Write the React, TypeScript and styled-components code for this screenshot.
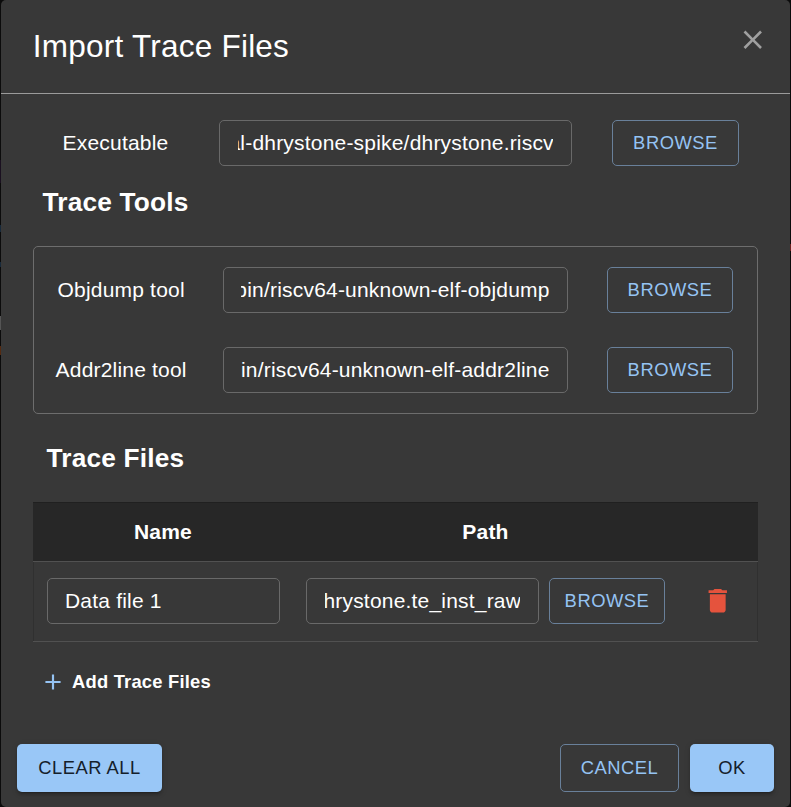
import React from "react";
import styled, { createGlobalStyle } from "styled-components";

const GlobalStyle = createGlobalStyle`
  * { box-sizing: border-box; }
  body {
    margin: 0;
    background: #0b0b0b;
    color: #fff;
    font-family: "Liberation Sans", Arial, sans-serif;
    font-size: 21px;
    letter-spacing: 0.00938em;
  }
`;

const Backdrop = styled.div`
  height: 807px;
  padding: 0 1px;
  overflow: hidden;
  background:
    linear-gradient(#0b0b0b 160px, #1a1020 160px 183px, #0b0b0b 183px 225px, #17293a 225px 232px,
      #0b0b0b 232px 262px, #17293a 262px 267px, #0b0b0b 267px 316px, #555 316px 330px, #0b0b0b 330px 346px,
      #552a10 346px 355px, #0b0b0b 355px) left / 1px 100% no-repeat,
    linear-gradient(#0b0b0b 244px, #6b1f1f 244px 251px, #0b0b0b 251px) right / 1px 100% no-repeat,
    #0b0b0b;
`;

const Dialog = styled.section`
  display: flex;
  flex-direction: column;
  height: 807px;
  border-radius: 5px;
  background: #383838;
`;

const Header = styled.header`
  display: flex;
  justify-content: space-between;
  height: 94px;
  padding: 21px 21px 0 31.8px;
  border-bottom: 1px solid #9b9b9b;
`;

const Title = styled.h1`
  margin: 0;
  font-size: 31.5px;
  font-weight: 400;
  line-height: 50px;
  letter-spacing: 0.0075em;
`;

const CloseButton = styled.button`
  display: flex;
  width: 32px;
  height: 38px;
  padding: 3px 0 0;
  border: 0;
  background: none;
  color: #a0a0a0;
`;

const Content = styled.main`
  flex: 1;
  padding: 0 32px;
`;

const FieldRow = styled.div<{ $columns: string }>`
  display: grid;
  grid-template-columns: ${(p) => p.$columns};
  align-items: center;
  height: 46px;
`;

const ExecutableRow = styled(FieldRow)`
  margin-top: 26px;
`;

const Label = styled.label<{ $nudge?: number }>`
  padding-left: ${(p) => p.$nudge ?? 0}px;
  text-align: center;
  white-space: nowrap;
  line-height: 30px;
`;

const Gap = styled.span``;

const TextField = styled.div<{ $inset: number }>`
  height: 46px;
  min-width: 0;
  padding: 0 ${(p) => p.$inset}px;
  border: 1px solid #696969;
  border-radius: 5px;
`;

const FieldValue = styled.div<{ $scrolled?: boolean; $shift: number }>`
  display: flex;
  justify-content: ${(p) => (p.$scrolled ? "flex-end" : "flex-start")};
  overflow: hidden;
  line-height: 44px;
  white-space: nowrap;

  span {
    flex: none;
    margin-right: ${(p) => p.$shift}px;
  }
`;

const Button = styled.button<{ $filled?: boolean; $tall?: boolean; $width?: number }>`
  width: ${(p) => (p.$width ? `${p.$width}px` : "100%")};
  height: ${(p) => (p.$tall ? 48 : 46)}px;
  padding: 0;
  border: ${(p) => (p.$filled ? "0" : "1px solid #69809a")};
  border-radius: 5px;
  background: ${(p) => (p.$filled ? "#99c7f7" : "transparent")};
  box-shadow: ${(p) =>
    p.$filled
      ? "0 4px 1px -3px rgba(0,0,0,.2), 0 2.6px 2.6px rgba(0,0,0,.14), 0 1.3px 6.6px rgba(0,0,0,.12)"
      : "none"};
  color: ${(p) => (p.$filled ? "#15202b" : "#95c3f3")};
  font: 400 18.375px "Liberation Sans", Arial, sans-serif;
  letter-spacing: 0.02857em;
`;

const SectionTitle = styled.h2<{ $indent: number; $top: number }>`
  margin: ${(p) => p.$top}px 0 0 ${(p) => p.$indent}px;
  font-size: 26.25px;
  font-weight: 700;
  line-height: 42px;
  letter-spacing: 0.0075em;
`;

const ToolsPanel = styled.div`
  display: grid;
  row-gap: 34px;
  height: 168px;
  margin-top: 23px;
  padding: 20px 0;
  border: 1px solid #6d6d6d;
  border-radius: 5px;
`;

const FilesTable = styled.div`
  margin-top: 23px;
  border-bottom: 1px solid #515151;
`;

const TableHead = styled.div`
  display: grid;
  grid-template-columns: 260px 385px 1fr;
  align-items: center;
  height: 60px;
  border-top: 1px solid #202020;
  border-bottom: 1px solid #515151;
  background: #272727;
  font-weight: 700;
  text-align: center;
`;

const TableRow = styled.div`
  display: grid;
  grid-template-columns: 233px 26px 233px 10px 116px 37px 32px;
  align-items: center;
  height: 79px;
  padding: 0 13px 1px;
  border: 1px solid #303030;
  border-width: 0 1px;
`;

const IconButton = styled.button`
  display: flex;
  padding: 0;
  border: 0;
  background: none;
  color: #e5533d;
`;

const AddButton = styled.button`
  display: flex;
  align-items: center;
  gap: 6px;
  margin: 24px 0 0 7px;
  padding: 0;
  border: 0;
  background: none;
  color: #fff;
  font: 700 18.375px/32px "Liberation Sans", Arial, sans-serif;
  letter-spacing: 0.0115em;

  svg { color: #95c3f3; }
`;

const Footer = styled.footer`
  display: flex;
  gap: 11px;
  height: 63px;
  padding: 0 16px;
`;

const Spacer = styled.div`
  flex: 1;
`;

interface FieldProps {
  value: string;
  scrolled?: boolean;
  shift?: number;
  inset?: number;
}

function Field({ value, scrolled, shift = 0, inset = 17.4 }: FieldProps) {
  return (
    <TextField $inset={inset}>
      <FieldValue $scrolled={scrolled} $shift={shift}>
        <span>{value}</span>
      </FieldValue>
    </TextField>
  );
}

const Icon = ({ size, d }: { size: number; d: string }) => (
  <svg width={size} height={size} viewBox="0 0 24 24" fill="currentColor" aria-hidden="true">
    <path d={d} />
  </svg>
);

const closePath =
  "M19 6.41 17.59 5 12 10.59 6.41 5 5 6.41 10.59 12 5 17.59 6.41 19 12 13.41 17.59 19 19 17.59 13.41 12z";
const deletePath = "M6 19c0 1.1.9 2 2 2h8c1.1 0 2-.9 2-2V7H6zM19 4h-3.5l-1-1h-5l-1 1H5v2h14z";
const addPath = "M19 13h-6v6h-2v-6H5v-2h6V5h2v6h6z";

const tools = [
  { label: "Objdump tool", path: "bin/riscv64-unknown-elf-objdump" },
  { label: "Addr2line tool", path: "in/riscv64-unknown-elf-addr2line" },
];

export default function App() {
  return (
    <>
      <GlobalStyle />
      <Backdrop>
        <Dialog>
          <Header>
            <Title>Import Trace Files</Title>
            <CloseButton aria-label="Close">
              <Icon size={31.5} d={closePath} />
            </CloseButton>
          </Header>
          <Content>
            <ExecutableRow $columns="164px 22px 353px 40px 127px">
              <Label $nudge={1}>Executable</Label>
              <Gap />
              <Field value="al-dhrystone-spike/dhrystone.riscv" scrolled shift={-1} inset={18.2} />
              <Gap />
              <Button>BROWSE</Button>
            </ExecutableRow>
            <SectionTitle $indent={9.5} $top={15}>Trace Tools</SectionTitle>
            <ToolsPanel>
              {tools.map((tool) => (
                <FieldRow key={tool.label} $columns="174px 15px 345px 39px 126px">
                  <Label $nudge={0.3}>{tool.label}</Label>
                  <Gap />
                  <Field value={tool.path} scrolled />
                  <Gap />
                  <Button>BROWSE</Button>
                </FieldRow>
              ))}
            </ToolsPanel>
            <SectionTitle $indent={13.5} $top={23}>Trace Files</SectionTitle>
            <FilesTable>
              <TableHead>
                <span>Name</span>
                <span>Path</span>
              </TableHead>
              <TableRow>
                <Field value="Data file 1" inset={17} />
                <Gap />
                <Field value="hrystone.te_inst_raw" scrolled shift={-1} inset={17.9} />
                <Gap />
                <Button>BROWSE</Button>
                <Gap />
                <IconButton aria-label="Delete">
                  <Icon size={31.5} d={deletePath} />
                </IconButton>
              </TableRow>
            </FilesTable>
            <AddButton>
              <Icon size={26} d={addPath} />
              Add Trace Files
            </AddButton>
          </Content>
          <Footer>
            <Button $filled $tall $width={145}>CLEAR ALL</Button>
            <Spacer />
            <Button $tall $width={119}>CANCEL</Button>
            <Button $filled $tall $width={84}>OK</Button>
          </Footer>
        </Dialog>
      </Backdrop>
    </>
  );
}
